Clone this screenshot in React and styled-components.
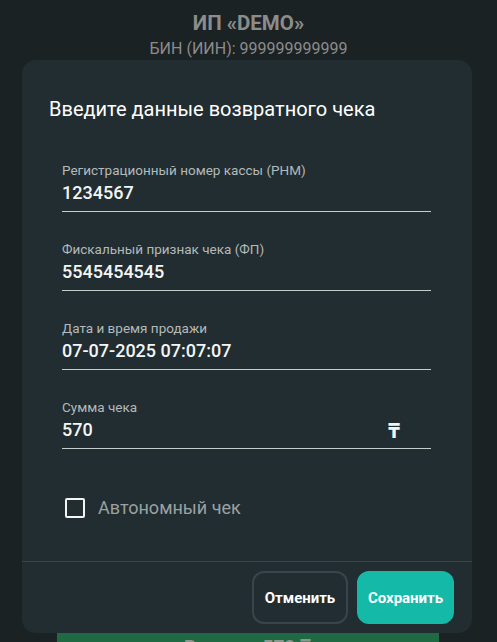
import styled, { createGlobalStyle } from 'styled-components'

const Global = createGlobalStyle`
  html, body {
    margin: 0;
    height: 100%;
    overflow: hidden;
    background: #1b2224;
    font-family: Roboto, "Noto Sans", sans-serif;
  }
  #root { height: 100%; }
`

const Page = styled.div`
  height: 100%;
  display: flex;
  flex-direction: column;
  align-items: center;
`

const Header = styled.div`
  padding-top: 11px;
  text-align: center;
  color: #8c8c8c;
`

const Company = styled.div`
  font-size: 20.5px;
  font-weight: 700;
  line-height: 24px;
`

const Bin = styled.div`
  font-size: 16px;
  line-height: 26px;
  margin-top: 1px;
`

const ReturnBar = styled.div`
  margin-top: auto;
  margin-bottom: -30px;
  width: 382px;
  height: 52px;
  margin-left: -2px;
  background: #1f6a43;
  color: #8e9690;
  font-size: 19px;
  font-weight: 700;
  display: flex;
  align-items: center;
  justify-content: center;
`

const Overlay = styled.div`
  position: fixed;
  inset: 0;
  display: flex;
  justify-content: center;
  padding-top: 60px;
`

const Modal = styled.div`
  width: 450px;
  height: 573px;
  margin-left: -3px;
  background: #212d31;
  border-radius: 14px;
  display: flex;
  flex-direction: column;
`

const Body = styled.div`
  flex: 1;
  padding: 36px 41px 0 27px;
`

const Title = styled.h2`
  margin: 0 0 39px;
  font-size: 20px;
  font-weight: 400;
  color: #ffffff;
  line-height: 26px;
`

const Fields = styled.div`
  padding-left: 13px;
  display: flex;
  flex-direction: column;
  gap: 28px;
`

const Field = styled.div`
  border-bottom: 1px solid #c4cccc;
  padding-bottom: 4px;
`

const Label = styled.div`
  font-size: 13.5px;
  color: #b4b9b9;
  line-height: 18px;
`

const ValueRow = styled.div`
  display: flex;
  align-items: center;
  justify-content: space-between;
  padding-right: 31px;
`

const Value = styled.div`
  font-size: 18px;
  font-weight: 500;
  color: #f4f6f6;
  line-height: 28px;
`

const Tenge = styled.span`
  font-size: 21px;
  font-weight: 700;
  color: #f2f4f4;
`

const CheckRow = styled.label`
  display: flex;
  align-items: center;
  gap: 13px;
  margin: 48px 0 0 16px;
`

const Box = styled.span`
  width: 16px;
  height: 16px;
  border: 2px solid #f4f4f4;
  border-radius: 2px;
`

const CheckText = styled.span`
  font-size: 18px;
  font-weight: 400;
  color: #9ba1a2;
`

const Footer = styled.div`
  border-top: 1px solid #39464a;
  padding: 9px 18px 9px 0;
  display: flex;
  justify-content: flex-end;
  gap: 9px;
`

const Button = styled.button`
  width: ${p => (p.$primary ? '97px' : '96px')};
  height: 53px;
  padding: 0;
  border-radius: 12px;
  font-family: Roboto, sans-serif;
  font-size: 15px;
  font-weight: 700;
  color: #ffffff;
  border: 2px solid ${p => (p.$primary ? '#15b9a8' : '#38454a')};
  background: ${p => (p.$primary ? '#15b9a8' : 'transparent')};
`

const fields = [
  ['Регистрационный номер кассы (РНМ)', '1234567'],
  ['Фискальный признак чека (ФП)', '5545454545'],
  ['Дата и время продажи', '07-07-2025 07:07:07'],
  ['Сумма чека', '570', true],
]

export default function App() {
  return (
    <>
      <Global />
      <Page>
        <Header>
          <Company>ИП «DEMO»</Company>
          <Bin>БИН (ИИН): 999999999999</Bin>
        </Header>
        <ReturnBar>Возврат 570 ₸</ReturnBar>
      </Page>
      <Overlay>
        <Modal>
          <Body>
            <Title>Введите данные возвратного чека</Title>
            <Fields>
              {fields.map(([label, value, money]) => (
                <Field key={label}>
                  <Label>{label}</Label>
                  <ValueRow>
                    <Value>{value}</Value>
                    {money && <Tenge>₸</Tenge>}
                  </ValueRow>
                </Field>
              ))}
            </Fields>
            <CheckRow>
              <Box />
              <CheckText>Автономный чек</CheckText>
            </CheckRow>
          </Body>
          <Footer>
            <Button>Отменить</Button>
            <Button $primary>Сохранить</Button>
          </Footer>
        </Modal>
      </Overlay>
    </>
  )
}
